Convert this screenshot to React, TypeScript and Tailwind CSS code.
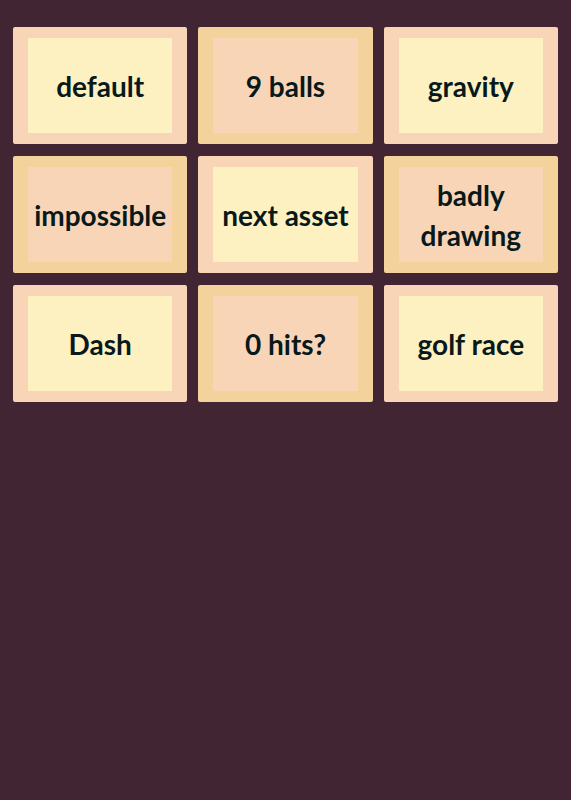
interface Level {
  name: string;
  tone: "cream" | "peach";
}

const levels: Level[] = [
  { name: "default", tone: "cream" },
  { name: "9 balls", tone: "peach" },
  { name: "gravity", tone: "cream" },
  { name: "impossible", tone: "peach" },
  { name: "next asset", tone: "cream" },
  { name: "badly drawing", tone: "peach" },
  { name: "Dash", tone: "cream" },
  { name: "0 hits?", tone: "peach" },
  { name: "golf race", tone: "cream" },
];

const tones = {
  cream: "border-[#f9d5b7] bg-[#fef1c1]",
  peach: "border-[#f3d29b] bg-[#f9d5b7]",
};

function LevelButton({ name, tone }: Level) {
  return (
    <button
      type="button"
      className={`flex h-[117px] min-w-0 items-center justify-center rounded-xs border-x-[15px] border-y-[11px] ${tones[tone]}`}
    >
      <span className="text-[28px] leading-10 font-bold text-[#08191b]">{name}</span>
    </button>
  );
}

export default function App() {
  return (
    <main className="min-h-screen bg-[#422532] px-[13px] py-[27px] font-['Lato',sans-serif]">
      <div className="grid grid-cols-3 gap-x-[11px] gap-y-3">
        {levels.map((level) => (
          <LevelButton key={level.name} {...level} />
        ))}
      </div>
    </main>
  );
}
